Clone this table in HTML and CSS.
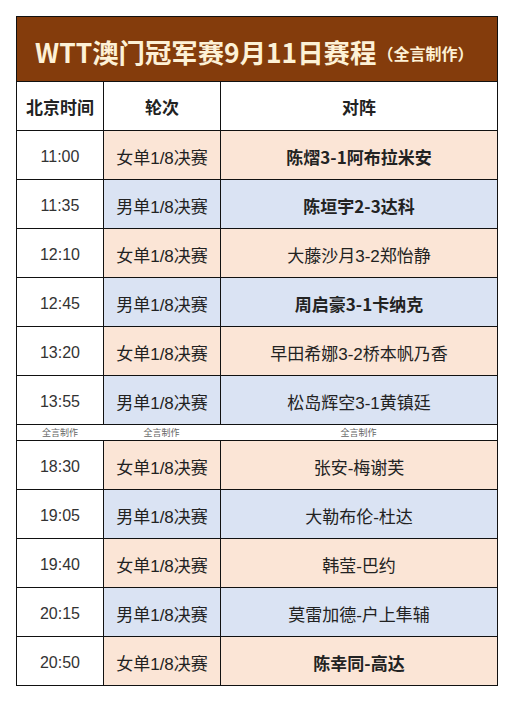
FILE: index.html
```html
<!DOCTYPE html>
<html lang="zh-CN">
<head>
<meta charset="utf-8">
<title>WTT澳门冠军赛9月11日赛程</title>
<link rel="stylesheet" href="styles.css">
</head>
<body>
<div class="sheet">
  <div class="title"><span class="title-main">WTT澳门冠军赛9月11日赛程</span><span class="title-sub">（全言制作）</span></div>
  <div class="row head">
    <div class="cell">北京时间</div>
    <div class="cell">轮次</div>
    <div class="cell">对阵</div>
  </div>
  <div class="row w">
    <div class="cell time">11:00</div>
    <div class="cell">女单1/8决赛</div>
    <div class="cell b">陈熠3-1阿布拉米安</div>
  </div>
  <div class="row m">
    <div class="cell time">11:35</div>
    <div class="cell">男单1/8决赛</div>
    <div class="cell b">陈垣宇2-3达科</div>
  </div>
  <div class="row w">
    <div class="cell time">12:10</div>
    <div class="cell">女单1/8决赛</div>
    <div class="cell">大藤沙月3-2郑怡静</div>
  </div>
  <div class="row m">
    <div class="cell time">12:45</div>
    <div class="cell">男单1/8决赛</div>
    <div class="cell b">周启豪3-1卡纳克</div>
  </div>
  <div class="row w">
    <div class="cell time">13:20</div>
    <div class="cell">女单1/8决赛</div>
    <div class="cell">早田希娜3-2桥本帆乃香</div>
  </div>
  <div class="row m">
    <div class="cell time">13:55</div>
    <div class="cell">男单1/8决赛</div>
    <div class="cell">松岛辉空3-1黄镇廷</div>
  </div>
  <div class="row sep">
    <div class="cell">全言制作</div>
    <div class="cell">全言制作</div>
    <div class="cell">全言制作</div>
  </div>
  <div class="row w">
    <div class="cell time">18:30</div>
    <div class="cell">女单1/8决赛</div>
    <div class="cell">张安-梅谢芙</div>
  </div>
  <div class="row m">
    <div class="cell time">19:05</div>
    <div class="cell">男单1/8决赛</div>
    <div class="cell">大勒布伦-杜达</div>
  </div>
  <div class="row w">
    <div class="cell time">19:40</div>
    <div class="cell">女单1/8决赛</div>
    <div class="cell">韩莹-巴约</div>
  </div>
  <div class="row m">
    <div class="cell time">20:15</div>
    <div class="cell">男单1/8决赛</div>
    <div class="cell">莫雷加德-户上隼辅</div>
  </div>
  <div class="row w">
    <div class="cell time">20:50</div>
    <div class="cell">女单1/8决赛</div>
    <div class="cell b">陈幸同-高达</div>
  </div>
</div>
</body>
</html>
```
FILE: styles.css
```css
html, body {
  margin: 0;
  padding: 0;
  background: #ffffff;
}
body {
  font-family: "Liberation Sans", "Noto Sans CJK SC", sans-serif;
  color: #222222;
}
.sheet {
  box-sizing: border-box;
  width: 482px;
  margin: 16px 0 0 16px;
  border: 1px solid #111111;
}
.title {
  height: 64px;
  background: #843c0c;
  color: #fdf1d6;
  display: flex;
  align-items: center;
  padding: 5px 0 0 18px;
  box-sizing: border-box;
}
.title-main {
  font-family: "Noto Sans CJK SC", sans-serif;
  font-weight: 700;
  font-size: 26.4px;
}
.title-sub {
  font-family: "Noto Sans CJK SC", sans-serif;
  font-weight: 700;
  font-size: 16px;
  margin-left: 1px;
  padding-top: 3px;
}
.row {
  display: grid;
  grid-template-columns: 86px 117px 1fr;
  height: 49px;
  box-sizing: border-box;
  border-top: 1px solid #111111;
}
.cell {
  display: flex;
  align-items: center;
  justify-content: center;
  font-size: 17px;
  white-space: nowrap;
  box-sizing: border-box;
}
.row .cell + .cell {
  border-left: 1px solid #111111;
}
.w .cell,
.m .cell {
  padding-top: 2px;
}
.head .cell {
  font-family: "Noto Sans CJK SC", sans-serif;
  font-weight: 700;
  background: #ffffff;
}
.w .time,
.m .time {
  font-family: "Liberation Sans", sans-serif;
  font-size: 16px;
  color: #333333;
  background: #ffffff;
  padding-top: 4px;
}
.w .cell:not(.time) {
  background: #fbe5d6;
}
.m .cell:not(.time) {
  background: #dae3f3;
}
.b {
  font-family: "Noto Sans CJK SC", sans-serif;
  font-weight: 700;
}
.row.sep {
  height: 16px;
}
.row.sep .cell {
  font-family: "Noto Sans CJK SC", sans-serif;
  font-size: 9px;
  line-height: 12px;
  color: #666666;
  background: #ffffff;
  border-left: none;
}
```
